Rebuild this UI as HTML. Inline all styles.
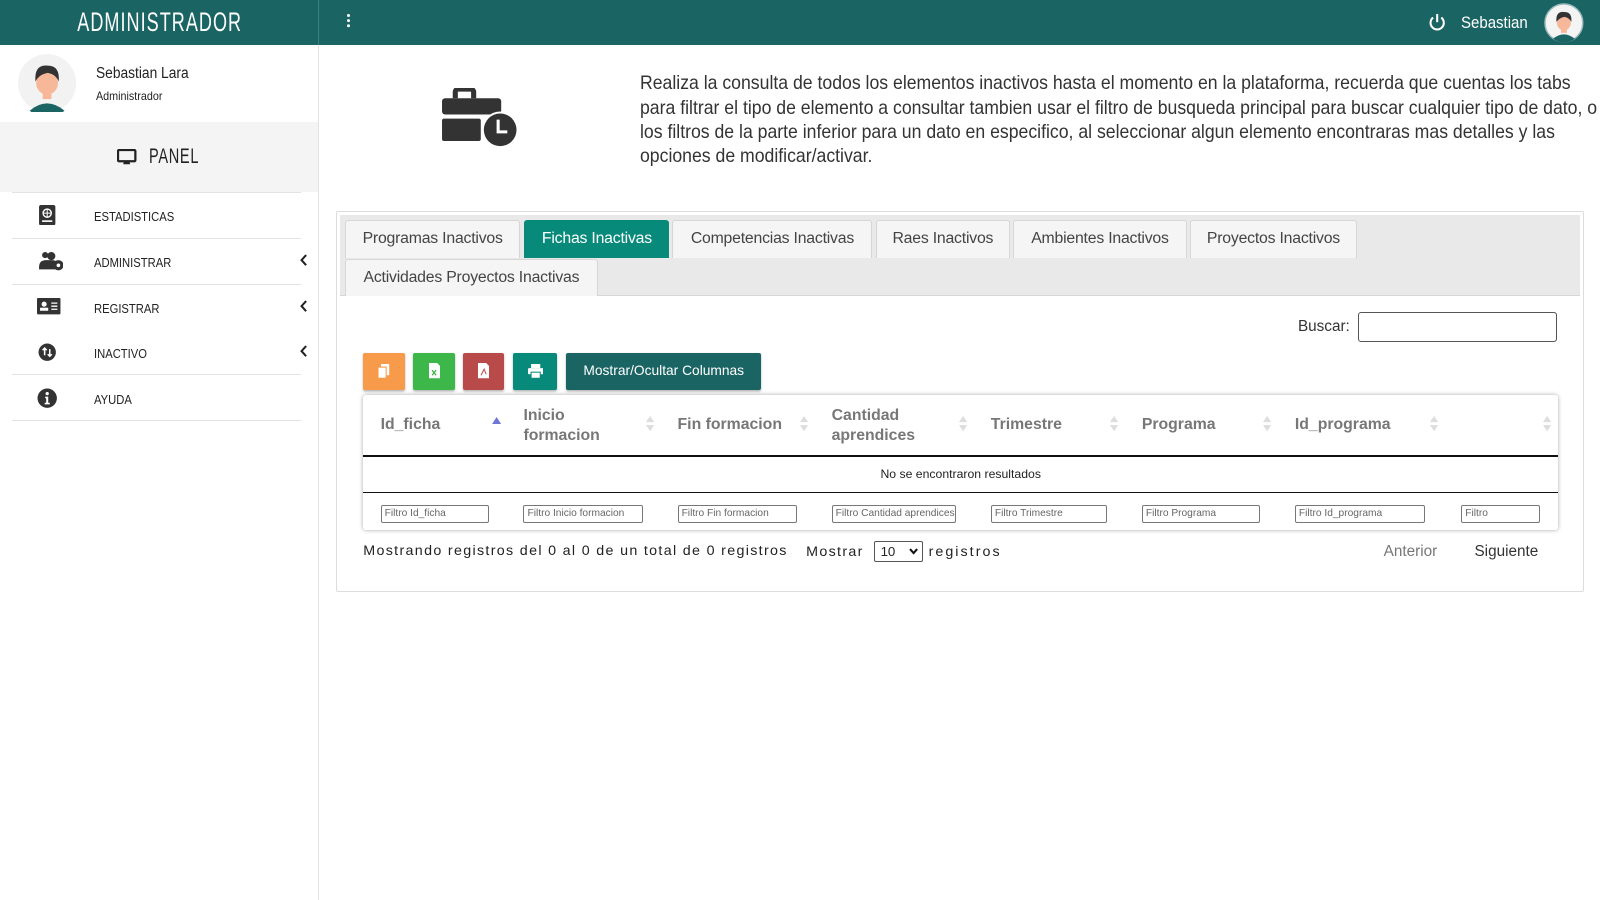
<!DOCTYPE html>
<html><head><meta charset="utf-8">
<style>
*{box-sizing:border-box;margin:0;padding:0}
html,body{width:1600px;height:900px;overflow:hidden;background:#fff}
#w{zoom:1.0204;width:1568px;height:882px;position:relative;font-family:"Liberation Sans",sans-serif;color:#222;overflow:hidden}
.a{position:absolute}
.n{transform-origin:left center;white-space:nowrap}
.top{left:0;top:0;width:1568px;height:44px;background:#1b6464}
.sb{left:0;top:44px;width:313px;height:838px;border-right:1px solid #e3e3e3;background:#fff}
.mi{position:absolute;left:12px;width:283px;height:45px;border-top:1px solid #e3e3e3;font-size:12.5px;color:#222}
.mi span{position:absolute;left:80px;top:16px;transform:scaleX(.88);transform-origin:left}
.mi svg.ic{position:absolute;left:24px;top:12px}
.mi .ch{position:absolute;left:282px;top:15px}
.tab{position:absolute;height:37px;border:1px solid #d6d6d6;border-bottom:none;background:#f5f5f5;font-size:15.5px;color:#444;text-align:center;line-height:36px;border-radius:3px 3px 0 0;letter-spacing:-.2px}
.btn{position:absolute;top:346px;height:36px;border-radius:2px;box-shadow:0 1px 2px rgba(0,0,0,.3)}
.th{position:absolute;top:398px;font-weight:bold;font-size:15.5px;color:#777;line-height:19px}
.so{position:absolute;top:408px;width:8px;height:16px}
.fi{position:absolute;top:495px;height:18px;border:1px solid #777;border-radius:2px;font-size:10px;color:#666;padding-left:3px;line-height:16px;white-space:nowrap;overflow:hidden}
</style></head><body><div id="w">
<div class="a top"></div>
<div class="a" style="left:312px;top:0;width:1px;height:44px;background:#3a8080"></div>
<div class="a" style="left:0;top:0;width:313px;height:44px;color:#fff;font-size:26px;text-align:center;line-height:44px;letter-spacing:1.5px;transform:scaleX(.68)">ADMINISTRADOR</div>
<div class="a" style="left:340px;top:14px;width:3px;height:3px;background:#fff;border-radius:50%;box-shadow:0 5px 0 #fff,0 10px 0 #fff"></div>
<svg class="a" style="left:1399px;top:13px" width="18" height="18" viewBox="0 0 18 18"><path d="M5 4.5A6.5 6.5 0 1 0 13 4.5" fill="none" stroke="#fff" stroke-width="2"/><path d="M9 1v8" stroke="#fff" stroke-width="2"/></svg>
<div class="a n" style="left:1432px;top:14px;color:#fff;font-size:16px;transform:scaleX(.92)">Sebastian</div>
<svg class="a" style="left:1513px;top:3px" width="39" height="39" viewBox="0 0 40 40"><circle cx="20" cy="20" r="19" fill="#f4f4f4" stroke="#9fbcbc" stroke-width="1.5"/><path d="M9 36q11-9 22 0a18 18 0 0 1-22 0z" fill="#1b6464"/><rect x="17" y="24" width="6" height="6" fill="#f7b89a"/><ellipse cx="20" cy="20" rx="7" ry="7.5" fill="#f7b89a"/><path d="M12.5 19q-1-11 8-10q8 0 7 10q-2-4-7-5q-5 1-8 5z" fill="#333"/></svg>

<div class="a sb"></div>
<svg class="a" style="left:18px;top:53px" width="57" height="57" viewBox="0 0 40 40"><circle cx="20" cy="20" r="20" fill="#f2f2f2"/><path d="M8 39q12-10 24 0a20 20 0 0 1-24 0z" fill="#1b6464"/><rect x="17" y="24" width="6" height="7" fill="#f7b89a"/><ellipse cx="20" cy="20" rx="7.5" ry="8" fill="#f7b89a"/><path d="M12 19q-1-12 8.5-11q8.5 0 7.5 11q-2-5-7.5-6q-6 1-8.5 6z" fill="#333"/></svg>
<div class="a n" style="left:94px;top:64px;font-size:15px;transform:scaleX(.9)">Sebastian Lara</div>
<div class="a n" style="left:94px;top:87px;font-size:12px;transform:scaleX(.88)">Administrador</div>
<div class="a" style="left:0;top:120px;width:312px;height:68px;background:#f4f4f4"></div>
<svg class="a" style="left:115px;top:146px" width="19" height="16" viewBox="0 0 19 16"><rect x="1" y="1" width="17" height="11" rx="1" fill="none" stroke="#222" stroke-width="2.2"/><path d="M7 12h5l1 3H6z" fill="#222"/></svg>
<div class="a n" style="left:146px;top:141px;font-size:21px;letter-spacing:1px;transform:scaleX(.68)">PANEL</div>

<div class="mi" style="top:188px"><svg class="ic" width="20" height="20" viewBox="0 0 20 20"><rect x="2" y="0" width="16" height="20" rx="2" fill="#333"/><circle cx="10" cy="8" r="4" fill="none" stroke="#fff" stroke-width="1.4"/><path d="M6 8h8M10 4v8" stroke="#fff" stroke-width="1"/><rect x="5" y="15" width="10" height="1.6" fill="#fff"/></svg><span>ESTADISTICAS</span></div>
<div class="mi" style="top:233px"><svg class="ic" width="26" height="20" viewBox="0 0 26 20"><circle cx="8" cy="4" r="3" fill="#333"/><circle cx="14" cy="5" r="4" fill="#333"/><path d="M2 16q0-7 7-7h6q4 0 5 3v6H2z" fill="#333"/><circle cx="21" cy="14" r="5" fill="#333"/><circle cx="21" cy="14" r="1.8" fill="#fff"/></svg><span>ADMINISTRAR</span><svg class="ch" width="8" height="12" viewBox="0 0 8 12"><path d="M6 1L1.5 6 6 11" fill="none" stroke="#222" stroke-width="2"/></svg></div>
<div class="mi" style="top:278px"><svg class="ic" width="24" height="18" viewBox="0 0 24 18"><rect x="0" y="1" width="23" height="16" rx="1" fill="#333"/><circle cx="7" cy="7" r="2.5" fill="#fff"/><rect x="3" y="10.5" width="8" height="3" fill="#fff"/><path d="M14 6h6M14 9h6M14 12h6" stroke="#fff" stroke-width="1.3"/></svg><span>REGISTRAR</span><svg class="ch" width="8" height="12" viewBox="0 0 8 12"><path d="M6 1L1.5 6 6 11" fill="none" stroke="#222" stroke-width="2"/></svg></div>
<div class="mi" style="top:323px;border-top:none"><svg class="ic" width="20" height="20" viewBox="0 0 20 20"><circle cx="10" cy="10" r="8.5" fill="#333"/><path d="M7.5 13V6M5.5 8l2-2 2 2M12.5 7v7M10.5 12l2 2 2-2" fill="none" stroke="#fff" stroke-width="1.5"/></svg><span>INACTIVO</span><svg class="ch" width="8" height="12" viewBox="0 0 8 12"><path d="M6 1L1.5 6 6 11" fill="none" stroke="#222" stroke-width="2"/></svg></div>
<div class="mi" style="top:367px;height:46px;border-bottom:1px solid #e3e3e3"><svg class="ic" width="20" height="20" viewBox="0 0 20 20"><circle cx="10" cy="10" r="9.5" fill="#333"/><circle cx="10" cy="5.5" r="1.6" fill="#fff"/><path d="M8 8.5h3v6h1.5v1.5h-5v-1.5H9v-4.5H8z" fill="#fff"/></svg><span>AYUDA</span></div>

<svg class="a" style="left:432px;top:86px" width="78" height="62" viewBox="0 0 78 62"><path d="M14 10V4a3 3 0 0 1 3-3h12a3 3 0 0 1 3 3v6" fill="none" stroke="#333" stroke-width="5"/><rect x="1" y="10" width="58" height="16" rx="3" fill="#333"/><rect x="1" y="30" width="38" height="22" rx="2" fill="#333"/><circle cx="58" cy="41" r="18" fill="#fff"/><circle cx="58" cy="41" r="16" fill="#333"/><path d="M56 31v12h9" fill="none" stroke="#fff" stroke-width="3"/></svg>
<div class="a n" style="left:627px;top:71px;font-size:18.6px;line-height:23.7px;color:#333;transform:scaleX(.93)">Realiza la consulta de todos los elementos inactivos hasta el momento en la plataforma, recuerda que cuentas los tabs<br>para filtrar el tipo de elemento a consultar tambien usar el filtro de busqueda principal para buscar cualquier tipo de dato, o<br>los filtros de la parte inferior para un dato en especifico, al seleccionar algun elemento encontraras mas detalles y las<br>opciones de modificar/activar.</div>

<div class="a" style="left:329px;top:207px;width:1223px;height:373px;border:1px solid #dcdcdc;border-radius:2px"></div>
<div class="a" style="left:333px;top:211px;width:1215px;height:79px;background:#e9e9e9;border-bottom:1px solid #d6d6d6"></div>
<div class="tab" style="left:338px;top:216px;width:172px">Programas Inactivos</div>
<div class="tab" style="left:514px;top:216px;width:142px;background:#088a7b;color:#fff;border-color:#088a7b">Fichas Inactivas</div>
<div class="tab" style="left:659px;top:216px;width:196px">Competencias Inactivas</div>
<div class="tab" style="left:858px;top:216px;width:132px">Raes Inactivos</div>
<div class="tab" style="left:993px;top:216px;width:170px">Ambientes Inactivos</div>
<div class="tab" style="left:1166px;top:216px;width:164px">Proyectos Inactivos</div>
<div class="tab" style="left:338px;top:254px;width:248px;height:36px">Actividades Proyectos Inactivas</div>

<div class="a" style="left:1272px;top:312px;font-size:15px;color:#333">Buscar:</div>
<div class="a" style="left:1331px;top:306px;width:195px;height:29px;border:1px solid #555;border-radius:3px"></div>

<div class="btn" style="left:356px;width:41px;background:#f79a4a"><svg style="position:absolute;left:14px;top:11px" width="13" height="14" viewBox="0 0 13 14"><path d="M3 0h8v11H3z" fill="#fff"/><path d="M0 3h8v11H0z" fill="#fff" stroke="#f79a4a"/></svg></div>
<div class="btn" style="left:405px;width:41px;background:#3db64a"><svg style="position:absolute;left:15px;top:10px" width="11" height="15" viewBox="0 0 11 15"><path d="M0 0h8l3 3v12H0z" fill="#fff"/><path d="M3 7l4 5M7 7l-4 5" stroke="#3db64a" stroke-width="1.3"/></svg></div>
<div class="btn" style="left:454px;width:40px;background:#b94a4a"><svg style="position:absolute;left:14px;top:10px" width="11" height="15" viewBox="0 0 11 15"><path d="M0 0h8l3 3v12H0z" fill="#fff"/><path d="M3 12l3-6 2 5" fill="none" stroke="#b94a4a" stroke-width="1"/></svg></div>
<div class="btn" style="left:503px;width:43px;background:#088a7b"><svg style="position:absolute;left:14px;top:11px" width="15" height="14" viewBox="0 0 15 14"><rect x="3" y="0" width="9" height="4" fill="#fff"/><rect x="0" y="4" width="15" height="6" rx="1" fill="#fff"/><rect x="3" y="8" width="9" height="6" fill="#fff" stroke="#088a7b"/></svg></div>
<div class="btn" style="left:555px;width:191px;background:#1b6464;color:#fff;font-size:13.5px;text-align:center;line-height:36px">Mostrar/Ocultar Columnas</div>

<div class="a" style="left:356px;top:387px;width:1171px;height:132px;border-radius:3px;box-shadow:0 0 4px rgba(0,0,0,.35);background:#fff"></div>
<div class="a" style="left:356px;top:446px;width:1171px;height:1.5px;background:#111"></div>
<div class="a" style="left:356px;top:482px;width:1171px;height:1.5px;background:#111"></div>
<div class="a" style="left:356px;top:458px;width:1171px;text-align:center;font-size:12px;color:#222">No se encontraron resultados</div>

<div class="th" style="left:373px;top:407px">Id_ficha</div>
<div class="th" style="left:513px">Inicio<br>formacion</div>
<div class="th" style="left:664px;top:407px">Fin formacion</div>
<div class="th" style="left:815px">Cantidad<br>aprendices</div>
<div class="th" style="left:971px;top:407px">Trimestre</div>
<div class="th" style="left:1119px;top:407px">Programa</div>
<div class="th" style="left:1269px;top:407px">Id_programa</div>
<svg class="a" style="left:482px;top:409px" width="9" height="7"><path d="M0 7L4.5 0 9 7z" fill="#6e76d8"/></svg>
<svg class="so" style="left:633px"><path d="M0 6L4 0 8 6zM0 9l4 6 4-6z" fill="#ddd"/></svg>
<svg class="so" style="left:784px"><path d="M0 6L4 0 8 6zM0 9l4 6 4-6z" fill="#ddd"/></svg>
<svg class="so" style="left:940px"><path d="M0 6L4 0 8 6zM0 9l4 6 4-6z" fill="#ddd"/></svg>
<svg class="so" style="left:1088px"><path d="M0 6L4 0 8 6zM0 9l4 6 4-6z" fill="#ddd"/></svg>
<svg class="so" style="left:1238px"><path d="M0 6L4 0 8 6zM0 9l4 6 4-6z" fill="#ddd"/></svg>
<svg class="so" style="left:1401px"><path d="M0 6L4 0 8 6zM0 9l4 6 4-6z" fill="#ddd"/></svg>
<svg class="so" style="left:1512px"><path d="M0 6L4 0 8 6zM0 9l4 6 4-6z" fill="#ddd"/></svg>

<div class="fi" style="left:373px;width:106px">Filtro Id_ficha</div>
<div class="fi" style="left:513px;width:117px">Filtro Inicio formacion</div>
<div class="fi" style="left:664px;width:117px">Filtro Fin formacion</div>
<div class="fi" style="left:815px;width:122px">Filtro Cantidad aprendices</div>
<div class="fi" style="left:971px;width:114px">Filtro Trimestre</div>
<div class="fi" style="left:1119px;width:116px">Filtro Programa</div>
<div class="fi" style="left:1269px;width:128px">Filtro Id_programa</div>
<div class="fi" style="left:1432px;width:77px">Filtro</div>

<div class="a" style="left:356px;top:532px;font-size:14px;letter-spacing:1.3px;color:#222">Mostrando registros del 0 al 0 de un total de 0 registros</div>
<div class="a" style="left:790px;top:533px;font-size:14px;letter-spacing:1.3px;color:#222">Mostrar</div>
<div class="a" style="left:857px;top:530px;width:48px;height:21px;border:1px solid #555;border-radius:2px;font-size:13px;line-height:19px;padding-left:5px">10<svg style="position:absolute;left:33px;top:6px" width="9" height="7"><path d="M1 1l3.5 4L8 1" fill="none" stroke="#111" stroke-width="2"/></svg></div>
<div class="a" style="left:910px;top:533px;font-size:14px;letter-spacing:2px;color:#222">registros</div>
<div class="a" style="left:1356px;top:532px;font-size:15px;color:#777">Anterior</div>
<div class="a" style="left:1445px;top:532px;font-size:15px;color:#333">Siguiente</div>
</div></body></html>
